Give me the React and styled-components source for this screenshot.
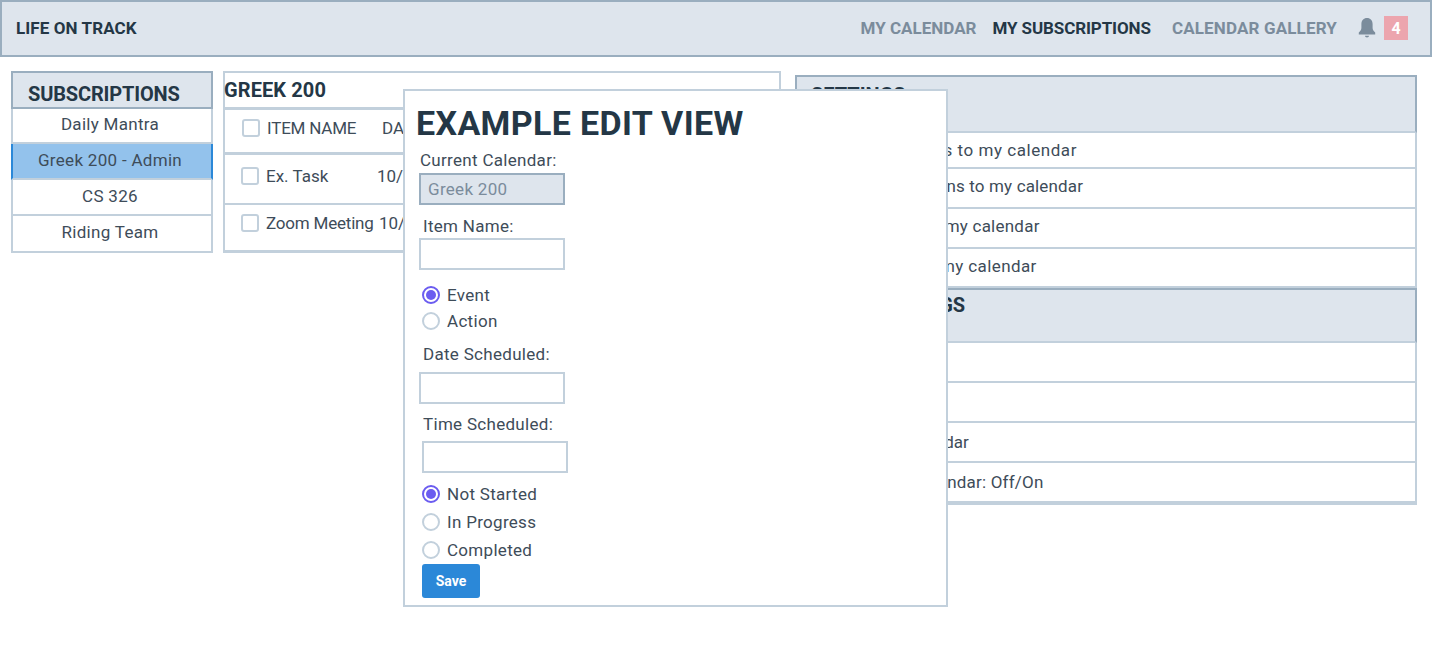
import React from 'react'
import styled, { createGlobalStyle } from 'styled-components'

const GlobalStyle = createGlobalStyle`
  html, body {
    margin: 0;
    background: #fff;
    font-family: Roboto, "Liberation Sans", sans-serif;
    color: #3e4c59;
  }
  * { box-sizing: border-box; }
`

const Page = styled.div`
  position: relative;
  width: 1432px;
  height: 652px;
  overflow: hidden;
`

const Header = styled.header`
  display: flex;
  align-items: center;
  justify-content: space-between;
  height: 57px;
  padding: 0 22px 1px 14px;
  background: #dee5ed;
  border: 2px solid #9aaebf;
`

const Brand = styled.div`
  font-size: 17px;
  font-weight: 700;
  letter-spacing: .1px;
  color: #243746;
`

const Nav = styled.nav`
  display: flex;
  align-items: center;
`

const NavLink = styled.a`
  font-size: 17px;
  font-weight: 700;
  letter-spacing: ${p => p.$spacing}px;
  margin-right: ${p => p.$gap}px;
  color: ${p => (p.$active ? '#243746' : '#7b8c9c')};
`

const Badge = styled.span`
  display: flex;
  align-items: center;
  justify-content: center;
  width: 24px;
  height: 24px;
  margin-left: 8px;
  background: #eca5ae;
  color: #fff;
  font-size: 16px;
  font-weight: 700;
`

const Content = styled.main`
  display: flex;
  align-items: flex-start;
  padding: 14px 15px 0 11px;
`

const Sidebar = styled.aside`
  width: 202px;
  flex: none;
  margin-right: 10px;
`

const SideTitle = styled.h2`
  margin: 0;
  height: 38px;
  padding: 8px 0 0 15px;
  background: #dee5ed;
  border: 2px solid #9aaebf;
  font-size: 20px;
  line-height: 26px;
  font-weight: 700;
  letter-spacing: -.15px;
  color: #243746;
`

const SideItem = styled.div`
  height: ${p => p.$h || 36}px;
  padding: ${p => p.$top || 4}px 4px 0 0;
  text-align: center;
  font-size: 17px;
  line-height: 24px;
  letter-spacing: .3px;
  color: #3e4c59;
  background: ${p => (p.$selected ? '#93c2ec' : '#fff')};
  border: 2px solid #c2d0dc;
  border-top-width: 0;
  border-left-color: ${p => (p.$selected ? '#2b88d8' : '#c2d0dc')};
  border-right-color: ${p => (p.$selected ? '#2b88d8' : '#c2d0dc')};
`

const Middle = styled.section`
  width: 558px;
  flex: none;
  margin-right: 14px;
  border: 2px solid #c2d0dc;
  border-bottom-width: 3px;
`

const MiddleTitle = styled.h2`
  margin: 0;
  height: 37px;
  padding: 4px 0 0 0;
  border-bottom: 3px solid #c2d0dc;
  font-size: 20px;
  line-height: 26px;
  font-weight: 700;
  letter-spacing: .1px;
  color: #243746;
  text-indent: -1px;
`

const ItemRow = styled.div`
  display: flex;
  align-items: flex-start;
  height: ${p => p.$h}px;
  padding: ${p => p.$top}px 0 0 ${p => p.$left}px;
  border-bottom: ${p => p.$line}px solid #c2d0dc;
  font-size: 17px;
  line-height: 24px;
`

const Check = styled.span`
  flex: none;
  width: 18px;
  height: 18px;
  margin: 3px 7px 0 0;
  border: 2px solid #c2d0dc;
  border-radius: 3px;
  background: #fff;
`

const ItemCell = styled.span`
  width: ${p => p.$w}px;
  flex: none;
  white-space: nowrap;
  letter-spacing: ${p => p.$spacing || 0}px;
`

const Settings = styled.section`
  width: 622px;
  flex: none;
  margin-top: 4px;
  border-bottom: 2px solid #c2d0dc;
`

const SettingsHead = styled.h2`
  margin: 0;
  height: ${p => p.$h}px;
  padding: ${p => p.$top}px 0 0 14px;
  background: #dee5ed;
  border: 2px solid #9aaebf;
  border-bottom: 2px solid #c2d0dc;
  font-size: 20px;
  line-height: 26px;
  font-weight: 700;
  color: #243746;
`

const SettingsRow = styled.div`
  height: ${p => p.$h}px;
  padding: ${p => p.$top}px 0 0 14px;
  font-size: 17px;
  line-height: 24px;
  letter-spacing: ${p => p.$spacing ?? 0.3}px;
  color: #3e4c59;
  border: 2px solid #c2d0dc;
  border-top-width: 0;
`

const Modal = styled.form`
  position: absolute;
  left: 403px;
  top: 89px;
  width: 545px;
  height: 518px;
  padding: 10px 0 0 14px;
  background: #fff;
  border: 2px solid #c2d0dc;
`

const ModalTitle = styled.h1`
  margin: 0 0 3px -3px;
  font-size: 34px;
  line-height: 44px;
  font-weight: 700;
  letter-spacing: .35px;
  color: #243746;
`

const Label = styled.label`
  display: block;
  padding-left: ${p => p.$indent}px;
  margin-top: ${p => p.$top || 0}px;
  font-size: 17px;
  line-height: 24px;
  letter-spacing: .3px;
  color: #3e4c59;
`

const TextField = styled.input`
  display: block;
  width: 146px;
  height: 32px;
  margin: ${p => p.$top || 0}px 0 0 ${p => p.$left || 0}px;
  padding: 0 7px;
  font: inherit;
  font-size: 17px;
  letter-spacing: .3px;
  color: #7b8c9c;
  background: ${p => (p.disabled ? '#dee5ed' : '#fff')};
  border: 2px solid ${p => (p.disabled ? '#9aaebf' : '#c2d0dc')};
  border-radius: 0;
  outline: none;
  &:disabled { opacity: 1; -webkit-text-fill-color: #7b8c9c; }
`

const RadioRow = styled.label`
  display: flex;
  align-items: center;
  height: ${p => p.$h}px;
  margin-top: ${p => p.$top || 0}px;
  padding-left: 3px;
  font-size: 17px;
  letter-spacing: .3px;
  color: #3e4c59;
`

const Radio = styled.span`
  position: relative;
  flex: none;
  width: 18px;
  height: 18px;
  margin-right: 7px;
  border-radius: 50%;
  border: 2px solid ${p => (p.$on ? '#6b5cf0' : '#c2d0dc')};
  background: #fff;
  &::after {
    content: '';
    display: ${p => (p.$on ? 'block' : 'none')};
    position: absolute;
    inset: 2px;
    border-radius: 50%;
    background: #6b5cf0;
  }
`

const SaveButton = styled.button`
  display: block;
  width: 58px;
  height: 34px;
  margin: 0 0 0 3px;
  padding: 0;
  border: 0;
  border-radius: 3px;
  background: #2b88d8;
  color: #fff;
  font: inherit;
  font-size: 14px;
  font-weight: 700;
`

const BellIcon = () => (
  <svg width="18" height="20" viewBox="0 0 18 20" fill="#7b8c9c">
    <path d="M9 0C5.6 0 3.4 2.5 3.4 6v4c0 2-1.2 3.2-2.6 4.6v1.9h16.4v-1.9c-1.4-1.4-2.6-2.6-2.6-4.6V6C14.6 2.5 12.4 0 9 0z" />
    <path d="M7 17.8h4c0 1-.9 1.7-2 1.7s-2-.7-2-1.7z" />
  </svg>
)

const App = () => {
  return (
    <Page>
      <GlobalStyle />
      <Header>
        <Brand>LIFE ON TRACK</Brand>
        <Nav>
          <NavLink $gap={16} $spacing={0}>MY CALENDAR</NavLink>
          <NavLink $gap={21} $spacing={-0.1} $active>MY SUBSCRIPTIONS</NavLink>
          <NavLink $gap={21} $spacing={0.15}>CALENDAR GALLERY</NavLink>
          <BellIcon />
          <Badge>4</Badge>
        </Nav>
      </Header>

      <Content>
        <Sidebar>
          <SideTitle>SUBSCRIPTIONS</SideTitle>
          <SideItem $h={35} $top={3}>Daily Mantra</SideItem>
          <SideItem $selected>Greek 200 - Admin</SideItem>
          <SideItem>CS 326</SideItem>
          <SideItem $h={37}>Riding Team</SideItem>
        </Sidebar>

        <Middle>
          <MiddleTitle>GREEK 200</MiddleTitle>
          <ItemRow $h={45} $top={6} $left={17} $line={3}>
            <Check />
            <ItemCell $w={115} $spacing={-0.2}>ITEM NAME</ItemCell>
            <ItemCell $w={60}>DATE</ItemCell>
          </ItemRow>
          <ItemRow $h={50} $top={9} $left={16} $line={2}>
            <Check />
            <ItemCell $w={111}>Ex. Task</ItemCell>
            <ItemCell $w={60}>10/12</ItemCell>
          </ItemRow>
          <ItemRow $h={45} $top={6} $left={16} $line={0}>
            <Check />
            <ItemCell $w={113} $spacing={-0.2}>Zoom Meeting</ItemCell>
            <ItemCell $w={60}>10/14</ItemCell>
          </ItemRow>
        </Middle>

        <Settings>
          <SettingsHead $h={58} $top={5}>SETTINGS</SettingsHead>
          <SettingsRow $h={36} $top={5} $spacing={0.55}>Add all reminders to my calendar</SettingsRow>
          <SettingsRow $h={40} $top={5} $spacing={0.15}>Add all notifications to my calendar</SettingsRow>
          <SettingsRow $h={40} $top={5} $spacing={0.23}>Add all events to my calendar</SettingsRow>
          <SettingsRow $h={39} $top={5} $spacing={0.4}>Add all items to my calendar</SettingsRow>
          <SettingsHead $h={55} $top={2}>TEAM SETTINGS</SettingsHead>
          <SettingsRow $h={40} $top={7}>Edit item</SettingsRow>
          <SettingsRow $h={40} $top={7}>Delete item</SettingsRow>
          <SettingsRow $h={40} $top={7} $spacing={0.05}>Add item to calendar</SettingsRow>
          <SettingsRow $h={40} $top={7} $spacing={0.2}>Show this on calendar: Off/On</SettingsRow>
        </Settings>
      </Content>

      <Modal>
        <ModalTitle>EXAMPLE EDIT VIEW</ModalTitle>
        <Label $indent={1}>Current Calendar:</Label>
        <TextField disabled value="Greek 200" readOnly $top={1} />
        <Label $indent={4} $top={9}>Item Name:</Label>
        <TextField $top={0} />
        <RadioRow $h={26} $top={12}><Radio $on />Event</RadioRow>
        <RadioRow $h={26}><Radio />Action</RadioRow>
        <Label $indent={4} $top={8}>Date Scheduled:</Label>
        <TextField $top={6} />
        <Label $indent={4} $top={8}>Time Scheduled:</Label>
        <TextField $top={5} $left={3} />
        <RadioRow $h={28} $top={7}><Radio $on />Not Started</RadioRow>
        <RadioRow $h={28}><Radio />In Progress</RadioRow>
        <RadioRow $h={28}><Radio />Completed</RadioRow>
        <SaveButton type="button">Save</SaveButton>
      </Modal>
    </Page>
  )
}

export default App
